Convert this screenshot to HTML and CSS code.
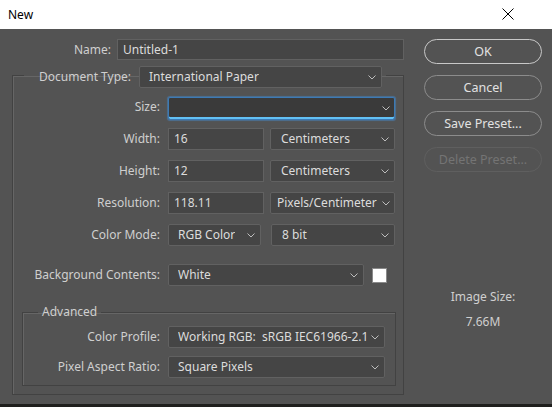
FILE: index.html
```html
<!DOCTYPE html>
<html>
<head>
<meta charset="utf-8">
<link rel="stylesheet" href="styles.css">
</head>
<body>
<div class="window">
  <div class="titlebar">
    <span class="title">New</span>
    <svg class="close" width="12" height="12" viewBox="0 0 12 12"><path d="M0.5 0.5 L11.5 11.5 M11.5 0.5 L0.5 11.5" stroke="#000" stroke-width="1" fill="none"/></svg>
  </div>
  <div class="dialog">
    <div class="main">
      <div class="name-row">
        <span class="lbl">Name:</span>
        <div class="field name-field">Untitled-1</div>
      </div>
      <fieldset class="doc">
        <legend class="doc-legend">
          <span class="lbl doc-lbl">Document Type:</span>
          <div class="select doc-select"><span>International Paper</span><svg class="chev" width="8" height="5" viewBox="0 0 8 5"><polyline points="0.5,0.5 4,4 7.5,0.5"/></svg></div>
        </legend>
        <div class="rows">
          <span class="lbl">Size:</span>
          <div class="ctrl"><div class="select focus size-select"><span></span><svg class="chev" width="8" height="5" viewBox="0 0 8 5"><polyline points="0.5,0.5 4,4 7.5,0.5"/></svg></div></div>

          <span class="lbl">Width:</span>
          <div class="ctrl pair"><div class="field num">16</div><div class="select unit"><span>Centimeters</span><svg class="chev" width="8" height="5" viewBox="0 0 8 5"><polyline points="0.5,0.5 4,4 7.5,0.5"/></svg></div></div>

          <span class="lbl">Height:</span>
          <div class="ctrl pair"><div class="field num">12</div><div class="select unit"><span>Centimeters</span><svg class="chev" width="8" height="5" viewBox="0 0 8 5"><polyline points="0.5,0.5 4,4 7.5,0.5"/></svg></div></div>

          <span class="lbl">Resolution:</span>
          <div class="ctrl pair"><div class="field num">118.11</div><div class="select unit tight"><span>Pixels/Centimeter</span><svg class="chev" width="8" height="5" viewBox="0 0 8 5"><polyline points="0.5,0.5 4,4 7.5,0.5"/></svg></div></div>

          <span class="lbl">Color Mode:</span>
          <div class="ctrl mode"><div class="select cmode"><span>RGB Color</span><svg class="chev" width="8" height="5" viewBox="0 0 8 5"><polyline points="0.5,0.5 4,4 7.5,0.5"/></svg></div><div class="select bits"><span>8 bit</span><svg class="chev" width="8" height="5" viewBox="0 0 8 5"><polyline points="0.5,0.5 4,4 7.5,0.5"/></svg></div></div>
        </div>
        <div class="rows bg-row">
          <span class="lbl">Background Contents:</span>
          <div class="ctrl bgc"><div class="select bg-select"><span>White</span><svg class="chev" width="8" height="5" viewBox="0 0 8 5"><polyline points="0.5,0.5 4,4 7.5,0.5"/></svg></div><div class="swatch"></div></div>
        </div>
        <fieldset class="adv">
          <legend class="adv-legend">Advanced</legend>
          <div class="adv-rows">
            <span class="lbl">Color Profile:</span>
            <div class="select"><span>Working RGB:&nbsp; sRGB IEC61966-2.1</span><svg class="chev" width="8" height="5" viewBox="0 0 8 5"><polyline points="0.5,0.5 4,4 7.5,0.5"/></svg></div>
            <span class="lbl">Pixel Aspect Ratio:</span>
            <div class="select"><span>Square Pixels</span><svg class="chev" width="8" height="5" viewBox="0 0 8 5"><polyline points="0.5,0.5 4,4 7.5,0.5"/></svg></div>
          </div>
        </fieldset>
      </fieldset>
    </div>
    <div class="side">
      <div class="btn default">OK</div>
      <div class="btn">Cancel</div>
      <div class="btn">Save Preset...</div>
      <div class="btn disabled">Delete Preset...</div>
      <div class="img-size">
        <div class="img-lbl">Image Size:</div>
        <div class="img-val">7.66M</div>
      </div>
    </div>
  </div>
  <div class="strip"></div>
</div>
</body>
</html>
```

FILE: styles.css
```css
* { box-sizing: border-box; }
html, body { margin: 0; padding: 0; }
body {
  font-family: "Noto Sans", "DejaVu Sans", sans-serif;
  font-size: 12px;
  background: #535353;
}
.window {
  width: 552px;
  height: 407px;
  display: flex;
  flex-direction: column;
  overflow: hidden;
}
.titlebar {
  height: 29px;
  background: #ffffff;
  display: flex;
  align-items: center;
  justify-content: space-between;
  padding: 0 38px 1px 8px;
  flex: none;
}
.title { color: #000; font-size: 12px; }
.close { display: block; }

.dialog {
  height: 375px;
  flex: none;
  background: #535353;
  display: flex;
  padding-top: 10px;
}
.strip {
  flex: 1;
  background: #1f1f1d;
}
.main {
  margin-left: 12px;
  width: 392px;
}
.lbl {
  color: #cfcfcf;
  text-align: right;
  line-height: 22px;
  white-space: nowrap;
}
.name-row {
  display: grid;
  grid-template-columns: 99px 287px;
  column-gap: 6px;
  height: 21px;
}
.name-row .lbl { line-height: 21px; }

.field, .select {
  height: 22px;
  background: #454545;
  border: 1px solid #616161;
  color: #dcdcdc;
  line-height: 20px;
  white-space: nowrap;
  overflow: hidden;
}
.field { padding-left: 5px; }
.name-field { height: 21px; line-height: 19px; }
.select {
  display: flex;
  align-items: center;
  justify-content: space-between;
  padding: 0 5px 0 9px;
  border-radius: 2px;
}
.select span { overflow: hidden; }
.chev { flex: none; fill: none; stroke: #bdbdbd; stroke-width: 1; display: block; }

fieldset.doc {
  margin: 2px 0 0 0;
  padding: 0;
  border: 1px solid #424242;
  box-shadow: inset 1px 1px 0 #666;
  width: 392px;
}
.doc-legend {
  margin-left: 11px;
  padding: 4px 4px 0 4px;
  display: flex;
}
.doc-lbl { width: 103px; }
.doc-select { width: 243px; margin-left: 8px; }

.rows {
  display: grid;
  grid-template-columns: 147px 227px;
  grid-auto-rows: 22px;
  column-gap: 8px;
  row-gap: 10px;
  margin-top: 8px;
}
.bg-row { margin-top: 18px; }
.ctrl { display: flex; }
.pair { gap: 6px; }
.num { width: 96px; flex: none; }
.unit { flex: 1; padding-left: 10px; }
.unit.tight { padding-left: 6px; padding-right: 4px; }
.mode { gap: 10px; }
.cmode { width: 93px; flex: none; }
.bits { flex: 1; padding-left: 10px; }
.bgc { align-items: center; gap: 8px; }
.bg-select { width: 196px; flex: none; }
.swatch {
  width: 15px;
  height: 15px;
  background: #ffffff;
  border: 1px solid #8a8a8a;
}
.size-select {
  flex: 1;
}
.size-select.focus {
  background: #3a3a3a;
  border-color: #3c7ab5;
  box-shadow: 0 0 1px 1px rgba(70,140,210,0.5), inset 0 -2px 0 #62c0f5;
  height: 23px;
  margin-top: 1px;
  padding-right: 4px;
}

fieldset.adv {
  margin: 18px 7px 8px 9px;
  padding: 0 0 7px 0;
  border: 1px solid #424242;
  box-shadow: inset 1px 1px 0 #666;
}
.adv-legend {
  margin-left: 15px;
  padding: 0 4px;
  color: #cfcfcf;
  line-height: 16px;
}
.adv-rows {
  display: grid;
  grid-template-columns: 137px 217px;
  grid-auto-rows: 22px;
  column-gap: 8px;
  row-gap: 8px;
  margin-top: 6px;
}

.side {
  margin-left: 20px;
  width: 118px;
  display: flex;
  flex-direction: column;
  gap: 11px;
}
.btn {
  height: 25px;
  border: 1px solid #8c8c8c;
  border-radius: 13px;
  color: #e2e2e2;
  font-size: 12.5px;
  display: flex;
  align-items: center;
  justify-content: center;
}
.btn.default { border-color: #c8c8c8; }
.btn.disabled { border-color: #5f5f5f; color: #747474; }
.img-size {
  margin-top: 106px;
  text-align: center;
  color: #cfcfcf;
  line-height: 16px;
}
.img-val { margin-top: 9px; }
```
